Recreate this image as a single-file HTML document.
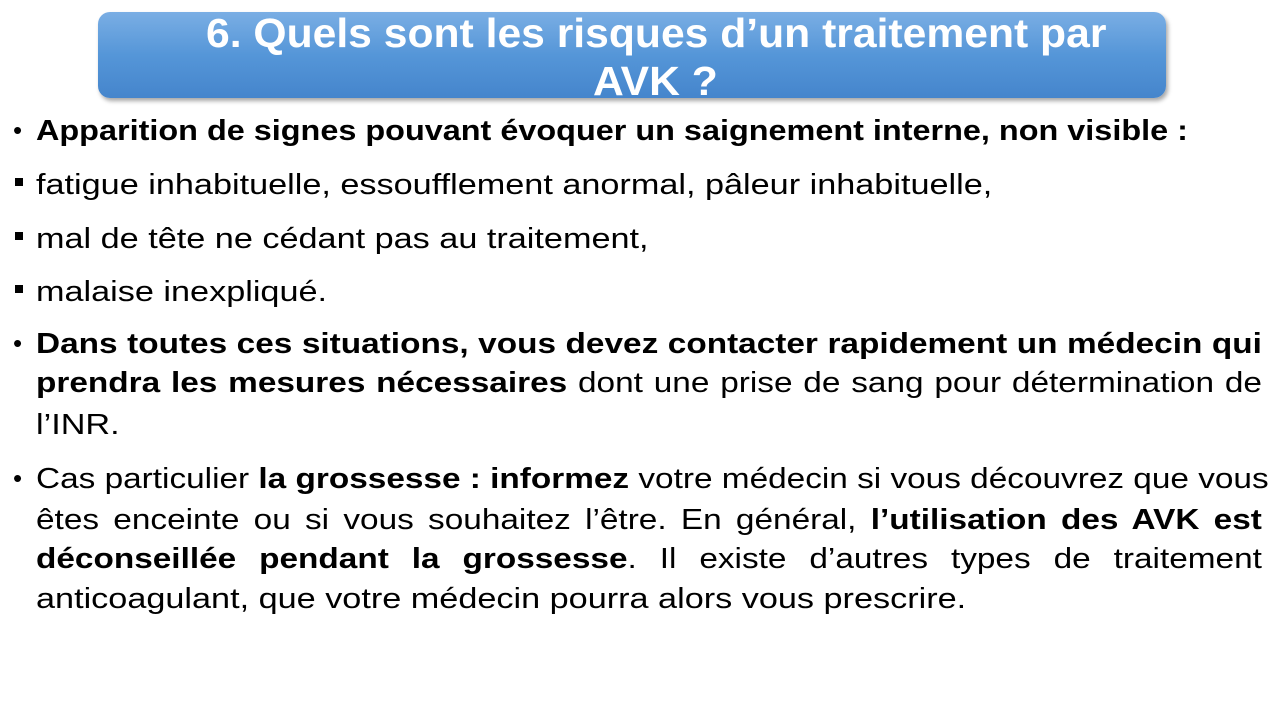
<!DOCTYPE html>
<html><head><meta charset="utf-8"><style>
body{margin:0;width:1280px;height:720px;background:#fff;position:relative;overflow:hidden;font-family:"Liberation Sans",sans-serif;}
.hdr{position:absolute;left:98px;top:12px;width:1068px;height:86px;border-radius:12px;background:linear-gradient(#7aaee4,#5596d8 50%,#4585cc);box-shadow:2px 3px 4px rgba(0,0,0,.35);}
.t{position:absolute;color:#fff;font-weight:bold;font-size:41px;white-space:nowrap;transform-origin:left top;transform:scaleX(1.04);line-height:44px;}
.l{position:absolute;left:36px;font-size:29px;color:#000;white-space:nowrap;transform-origin:left top;transform:scaleX(1.18);line-height:32px;}
.lb{transform:scaleX(1.117);}
.j{width:1066px;text-align:justify;text-align-last:justify;transform:scaleX(1.15);}
.b{font-weight:bold}
.bu{position:absolute;left:13px;font-size:26px;}
.sq{position:absolute;left:15px;width:8px;height:8px;background:#000;}
</style></head><body>
<div class="hdr"></div>
<div class="t" style="left:206px;top:11px">6. Quels sont les risques d’un traitement par</div>
<div class="t" style="left:593px;top:59px">AVK ?</div>

<div class="bu" style="top:115px">•</div>
<div class="l lb b" style="top:115px">Apparition de signes pouvant évoquer un saignement interne, non visible :</div>
<div class="sq" style="top:178px"></div>
<div class="l" style="top:169px">fatigue inhabituelle, essoufflement anormal, pâleur inhabituelle,</div>
<div class="sq" style="top:232px"></div>
<div class="l" style="top:223px">mal de tête ne cédant pas au traitement,</div>
<div class="sq" style="top:285px"></div>
<div class="l" style="top:276px">malaise inexpliqué.</div>
<div class="bu" style="top:328px">•</div>
<div class="l j" style="top:328px"><span class="b">Dans toutes ces situations, vous devez contacter rapidement un médecin qui</span></div>
<div class="l j" style="top:367px"><span class="b">prendra les mesures nécessaires</span> dont une prise de sang pour détermination de</div>
<div class="l" style="top:409px">l’INR.</div>
<div class="bu" style="top:463px">•</div>
<div class="l j" style="top:463px">Cas particulier <span class="b">la grossesse : informez</span> votre médecin si vous découvrez que vous</div>
<div class="l j" style="top:504px">êtes enceinte ou si vous souhaitez l’être. En général, <span class="b">l’utilisation des AVK est</span></div>
<div class="l j" style="top:543px"><span class="b">déconseillée pendant la grossesse</span>. Il existe d’autres types de traitement</div>
<div class="l" style="top:583px">anticoagulant, que votre médecin pourra alors vous prescrire.</div>
</body></html>
